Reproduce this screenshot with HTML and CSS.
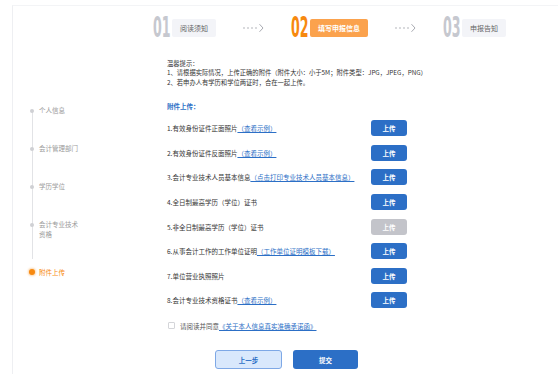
FILE: index.html
```html
<!DOCTYPE html>
<html lang="zh-CN">
<head>
<meta charset="UTF-8">
<meta name="viewport" content="width=device-width, initial-scale=1.0">
<title>填写申报信息</title>
<link rel="stylesheet" href="styles.css">
</head>
<body>
<div class="page">
    <div class="steps">
        <div class="step">
            <span class="step-num">01</span>
            <span class="step-name">阅读须知</span>
        </div>
        <svg class="step-arrow" width="21" height="10" viewBox="0 0 21 10">
            <circle cx="1" cy="5" r="0.8"/><circle cx="5" cy="5" r="0.8"/>
            <circle cx="9" cy="5" r="0.8"/><circle cx="13" cy="5" r="0.8"/>
            <path d="M16.5 1.2 L20 5 L16.5 8.8" fill="none" stroke="#a9abb2" stroke-width="1"/>
        </svg>
        <div class="step active">
            <span class="step-num">02</span>
            <span class="step-name">填写申报信息</span>
        </div>
        <svg class="step-arrow" width="21" height="10" viewBox="0 0 21 10">
            <circle cx="1" cy="5" r="0.8"/><circle cx="5" cy="5" r="0.8"/>
            <circle cx="9" cy="5" r="0.8"/><circle cx="13" cy="5" r="0.8"/>
            <path d="M16.5 1.2 L20 5 L16.5 8.8" fill="none" stroke="#a9abb2" stroke-width="1"/>
        </svg>
        <div class="step">
            <span class="step-num">03</span>
            <span class="step-name">申报告知</span>
        </div>
    </div>

    <div class="main">
        <ul class="timeline">
            <li>个人信息</li>
            <li>会计管理部门</li>
            <li>学历学位</li>
            <li>会计专业技术<br>资格</li>
            <li class="current">附件上传</li>
        </ul>

        <div class="content">
            <div class="hint">
                <p>温馨提示：</p>
                <p>1、请根据实际情况，上传正确的附件（附件大小：小于5M；附件类型：JPG，JPEG，PNG）</p>
                <p>2、若申办人有学历和学位两证时，合在一起上传。</p>
            </div>

            <h3 class="section-title">附件上传：</h3>

            <div class="file-list">
                <div class="file-row">
                    <span>1.有效身份证件正面照片<a href="#">（查看示例）</a></span>
                    <button class="upload-btn">上传</button>
                </div>
                <div class="file-row">
                    <span>2.有效身份证件反面照片<a href="#">（查看示例）</a></span>
                    <button class="upload-btn">上传</button>
                </div>
                <div class="file-row">
                    <span>3.会计专业技术人员基本信息<a href="#">（点击打印专业技术人员基本信息）</a></span>
                    <button class="upload-btn">上传</button>
                </div>
                <div class="file-row">
                    <span>4.全日制最高学历（学位）证书</span>
                    <button class="upload-btn">上传</button>
                </div>
                <div class="file-row">
                    <span>5.非全日制最高学历（学位）证书</span>
                    <button class="upload-btn" disabled>上传</button>
                </div>
                <div class="file-row">
                    <span>6.从事会计工作的工作单位证明<a href="#">（工作单位证明模板下载）</a></span>
                    <button class="upload-btn">上传</button>
                </div>
                <div class="file-row">
                    <span>7.单位营业执照照片</span>
                    <button class="upload-btn">上传</button>
                </div>
                <div class="file-row">
                    <span>8.会计专业技术资格证书<a href="#">（查看示例）</a></span>
                    <button class="upload-btn">上传</button>
                </div>
            </div>

            <label class="agree">
                <input type="checkbox">
                <span>请阅读并同意<a href="#">《关于本人信息真实准确承诺函》</a></span>
            </label>

            <div class="actions">
                <button class="btn-prev">上一步</button>
                <button class="btn-submit">提交</button>
            </div>
        </div>
    </div>
</div>
</body>
</html>
```

FILE: styles.css
```css
body {
    margin: 0;
    padding: 0;
    background: #fff;
    font-family: "Noto Sans CJK SC", "Noto Sans", sans-serif;
    font-size: 6.5px;
    color: #333;
}
.page {
    margin: 5px 0 0 12px;
    height: 368px;
    border-left: 1px solid #eeeff2;
    border-top: 1px solid #f3f4f6;
}

/* steps */
.steps {
    display: flex;
    align-items: center;
    height: 20px;
    margin-top: 12px;
    padding-left: 140px;
}
.step {
    display: flex;
    align-items: center;
}
.step-num {
    display: inline-block;
    width: 19px;
    height: 20px;
    line-height: 20px;
    font-family: "DejaVu Sans Condensed", "DejaVu Sans", sans-serif;
    font-size: 28px;
    font-weight: bold;
    color: #c6c8cf;
    transform: scaleX(0.5);
    transform-origin: left center;
}
.step-name {
    height: 18px;
    line-height: 18px;
    padding: 0 8px;
    font-size: 7px;
    color: #666;
    background: #f3f4f8;
    border-radius: 2px;
}
.step.active .step-num {
    color: #f7890f;
}
.step.active .step-name {
    background: #fba24d;
    color: #fff;
    font-weight: bold;
}
.step-arrow {
    margin: 0 27px;
    fill: #a9abb2;
}

/* main */
.main {
    display: flex;
}
.timeline {
    position: relative;
    list-style: none;
    margin: 0;
    padding: 68px 0 0 26px;
    width: 128px;
}
.timeline::before {
    content: "";
    position: absolute;
    left: 19px;
    top: 73px;
    height: 148px;
    border-left: 1px solid #e2e3e6;
}
.timeline li {
    position: relative;
    line-height: 9.5px;
    margin-bottom: 28.5px;
    color: #9a9a9a;
}
.timeline li::before {
    content: "";
    position: absolute;
    left: -9px;
    top: 3px;
    width: 4px;
    height: 4px;
    border-radius: 50%;
    background: #cfd0d4;
}
.timeline li.current {
    color: #f7890f;
}
.timeline li.current::before {
    left: -10px;
    top: 1.75px;
    width: 6px;
    height: 6px;
    background: #f7890f;
    box-shadow: 0 0 2px 1px rgba(247, 137, 15, 0.35);
}

.content {
    width: 240px;
    padding-top: 21px;
}
.hint p {
    margin: 0;
    line-height: 9.4px;
    white-space: nowrap;
    font-size: 6.3px;
}
.section-title {
    margin: 14px 0 0;
    line-height: 10px;
    font-size: 6.5px;
    color: #2c6fc6;
    font-weight: bold;
}
.file-list {
    display: flex;
    flex-direction: column;
    gap: 8.6px;
    margin-top: 9px;
}
.file-row {
    display: flex;
    justify-content: space-between;
    align-items: center;
    height: 16px;
}
.file-row a,
.agree a {
    color: #2c6fc6;
    text-decoration: underline;
}
.upload-btn {
    width: 36px;
    height: 16px;
    padding: 0;
    border: none;
    border-radius: 3px;
    background: #2c6fc6;
    color: #fff;
    font-family: inherit;
    font-size: 6.5px;
    font-weight: bold;
}
.upload-btn:disabled {
    background: #c3c4ca;
}
.agree {
    display: flex;
    align-items: center;
    gap: 5px;
    margin-top: 13px;
    height: 9px;
    color: #555;
}
.agree input {
    appearance: none;
    margin: 0 0 0 1px;
    width: 7px;
    height: 7px;
    border: 1px solid #d4d5d9;
    border-radius: 1px;
    background: #fff;
}
.actions {
    display: flex;
    justify-content: center;
    gap: 11px;
    margin-top: 20px;
    padding-right: 1px;
}
.actions button {
    height: 19px;
    border-radius: 3px;
    font-family: inherit;
    font-size: 6.5px;
    font-weight: bold;
}
.btn-prev {
    width: 67px;
    border: 1px solid #7ea8e6;
    background: #d9e8fc;
    color: #2c6fc6;
}
.btn-submit {
    width: 65px;
    border: none;
    background: #2c6fc6;
    color: #fff;
}
```
